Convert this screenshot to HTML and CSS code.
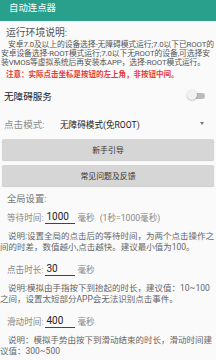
FILE: index.html
```html
<!DOCTYPE html>
<html lang="zh-CN">
<head>
<meta charset="utf-8">
<title>自动连点器</title>
<link rel="stylesheet" href="styles.css">
</head>
<body>
<header class="appbar"><h1 class="title">自动连点器</h1></header>
<main class="content">
  <section class="intro">
    <h2 class="intro-title">运行环境说明:</h2>
    <p class="intro-text">安卓7.0及以上的设备选择-无障碍模式运行;7.0以下已ROOT的安卓设备选择-ROOT模式运行;7.0以下无ROOT的设备,可选择安装VMOS等虚拟系统后再安装本APP，选择-ROOT模式运行。</p>
    <p class="notice">注意：实际点击坐标是按钮的左上角，非按钮中间。</p>
  </section>
  <div class="switch-row">
    <span class="switch-label">无障碍服务</span>
    <span class="switch"><span class="switch-track"></span><span class="switch-thumb"></span></span>
  </div>
  <div class="mode-row">
    <span class="mode-label">点击模式:</span>
    <span class="mode-value">无障碍模式(免ROOT)</span>
    <span class="mode-arrow"></span>
  </div>
  <div class="buttons">
    <button class="btn">新手引导</button>
    <button class="btn">常见问题及反馈</button>
  </div>
  <section class="settings">
    <h2 class="settings-title">全局设置:</h2>
    <div class="field">
      <span class="field-label">等待时间:</span>
      <span class="field-input">1000</span>
      <span class="field-unit">毫秒</span>
      <span class="field-hint">(1秒=1000毫秒)</span>
    </div>
    <p class="desc">说明:设置全局的点击后的等待时间，为两个点击操作之间的时差，数值越小,点击越快。建议最小值为100。</p>
    <div class="field">
      <span class="field-label">点击时长:</span>
      <span class="field-input">30</span>
      <span class="field-unit">毫秒</span>
    </div>
    <p class="desc">说明:模拟由手指按下到抬起的时长，建议值：10~100之间，设置太短部分APP会无法识别点击事件。</p>
    <div class="field">
      <span class="field-label">滑动时间:</span>
      <span class="field-input">400</span>
      <span class="field-unit">毫秒</span>
    </div>
    <p class="desc">说明：模拟手势由按下到滑动结束的时长，滑动时间建议值：300~500</p>
  </section>
</main>
</body>
</html>
```
FILE: styles.css
```css
html, body {
  margin: 0;
  padding: 0;
}
body {
  width: 216px;
  height: 360px;
  overflow: hidden;
  background: #fafafa;
  font-family: Roboto, "Noto Sans CJK SC", sans-serif;
}
.appbar {
  height: 21px;
  box-sizing: border-box;
  padding: 2px 0 0 9px;
  background: #28a08c;
}
.title {
  margin: 0;
  font-size: 9.4px;
  line-height: 12px;
  font-weight: normal;
  color: #fff;
}
.content {
  display: flex;
  flex-direction: column;
}
.intro-title {
  margin: 5.5px 0 0 6px;
  font-size: 9.8px;
  line-height: 12px;
  font-weight: normal;
  color: #555;
}
.intro-text {
  margin: 1.15px 0 0;
  padding-left: 1px;
  text-indent: 7px;
  font-size: 7.8px;
  line-height: 9.3px;
  letter-spacing: -0.1px;
  color: #555;
}
.notice {
  margin: 2.3px 0 0 6px;
  font-size: 7.5px;
  line-height: 9.3px;
  font-weight: bold;
  color: #e53935;
}
.switch-row {
  display: flex;
  align-items: center;
  justify-content: space-between;
  height: 16px;
  margin-top: 8.85px;
  padding: 0 11px 0 4px;
}
.switch-label {
  font-size: 9.6px;
  color: #222;
}
.switch {
  position: relative;
  width: 18px;
  height: 10px;
}
.switch-track {
  position: absolute;
  left: 1px;
  right: 0;
  top: 2px;
  height: 6px;
  border-radius: 3px;
  background: #bcbcbc;
}
.switch-thumb {
  position: absolute;
  left: 0;
  top: -1px;
  width: 10px;
  height: 10px;
  border-radius: 50%;
  background: #f1f1f1;
  box-shadow: 0 0.5px 1.5px rgba(0, 0, 0, 0.35);
}
.mode-row {
  display: flex;
  align-items: center;
  height: 16px;
  margin-top: 12.5px;
  padding: 0 12px 0 4px;
}
.mode-label {
  width: 56px;
  font-size: 9.6px;
  color: #8a8a8a;
}
.mode-value {
  flex: 1;
  font-size: 8.6px;
  color: #222;
}
.mode-arrow {
  width: 0;
  height: 0;
  margin-bottom: 2px;
  border-left: 2.5px solid transparent;
  border-right: 2.5px solid transparent;
  border-top: 3px solid #777;
}
.buttons {
  display: flex;
  flex-direction: column;
  gap: 4.5px;
  margin: 6.5px 2px 0;
}
.btn {
  height: 21.5px;
  padding: 0;
  border: none;
  border-radius: 1.5px;
  background: #d6d6d6;
  box-shadow: 0 1px 1px rgba(0, 0, 0, 0.18);
  font-family: inherit;
  font-size: 7.9px;
  color: #333;
}
.settings-title {
  margin: 7px 0 4px 7px;
  font-size: 9.3px;
  line-height: 12px;
  font-weight: normal;
  color: #777;
}
.field {
  display: flex;
  align-items: center;
  height: 16px;
  padding-left: 7px;
  font-size: 8.6px;
  color: #888;
}
.field-input {
  width: 30px;
  height: 14px;
  margin-left: 2px;
  box-sizing: border-box;
  padding-left: 1px;
  border-bottom: 1px solid #444;
  font-size: 10px;
  line-height: 13px;
  color: #222;
}
.field-unit {
  margin-left: 2px;
}
.field-hint {
  margin-left: 5px;
}
.desc {
  margin: 5.15px 0 7.45px;
  text-indent: 8px;
  font-size: 8.5px;
  line-height: 11.7px;
  color: #666;
}
```
